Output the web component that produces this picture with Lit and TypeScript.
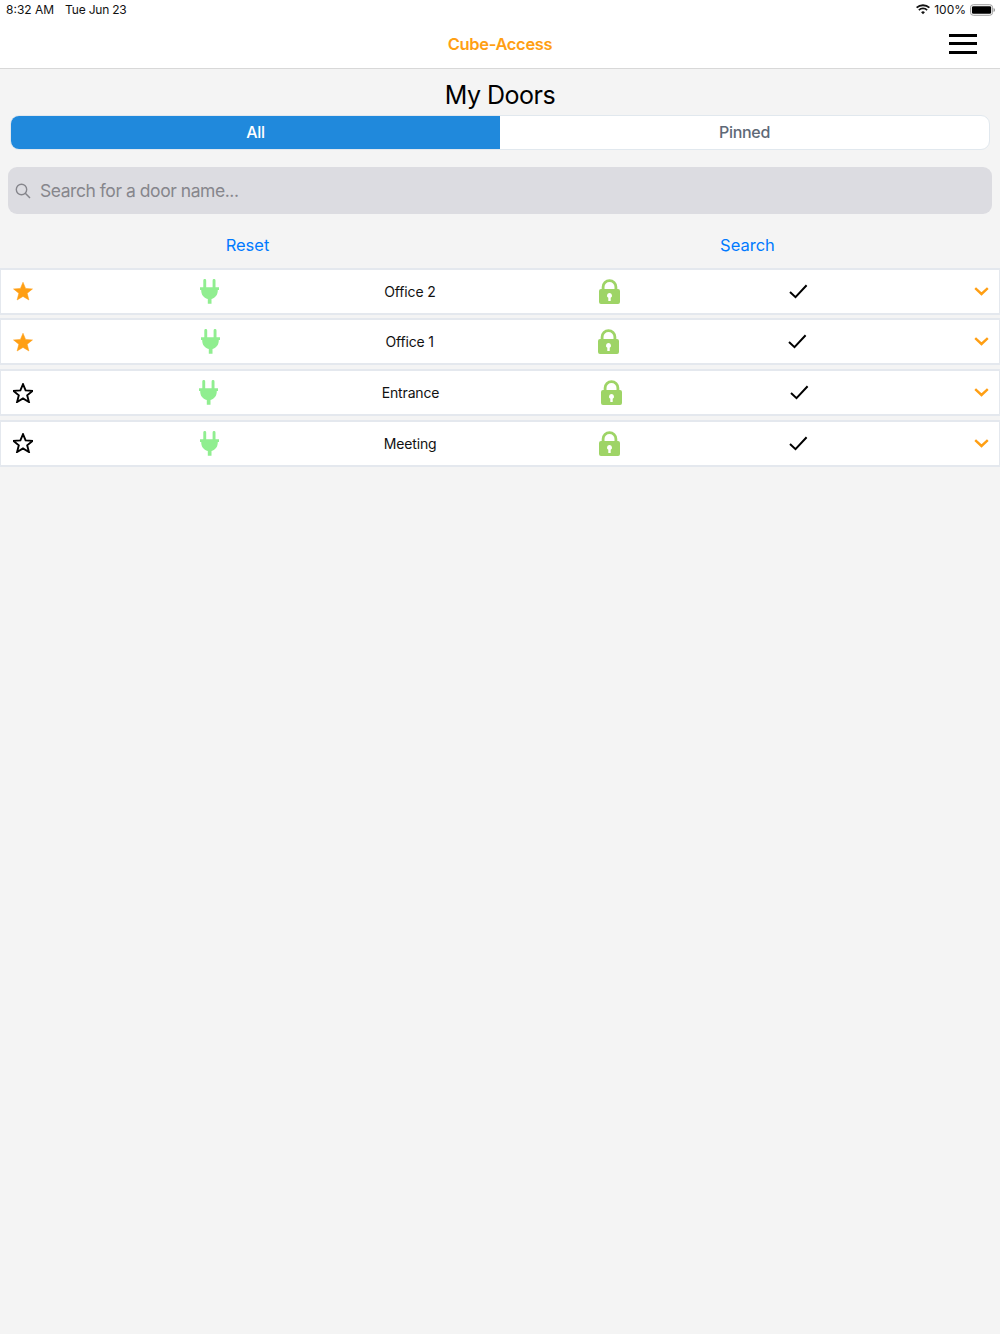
import { LitElement, html, css, svg } from "lit";
import { customElement } from "lit/decorators.js";

const star = (filled: boolean) => svg`<svg class="star" viewBox="0 0 20 20" width="20" height="20">
  <path d="M10 1.2 12.6 7.4 19.5 7.9 14.2 12.3 15.9 19 10 15.4 4.1 19 5.8 12.3 .5 7.9 7.4 7.4Z"
    fill=${filled ? "#ff9f14" : "none"} stroke=${filled ? "#ff9f14" : "#000"} stroke-width=${filled ? "0.5" : "1.9"} stroke-linejoin="miter"/></svg>`;

const plug = svg`<svg class="plug" viewBox="0 0 19 25" width="19" height="25">
  <path fill="#90ee90" d="M3.3 1.4a1.45 1.45 0 0 1 2.9 0V8.3H3.3ZM12.6 1.4a1.45 1.45 0 0 1 2.9 0V8.3h-2.9ZM0 8.3h19v2.8h-1.2c0 4.8-2.2 7.8-6.3 8.9V24.700H7.800V20C3.500 18.900 1.200 15.900 1.200 11.100H0Z"/></svg>`;

const lock = svg`<svg class="lock" viewBox="0 0 21 25" width="21" height="25">
  <path fill="none" stroke="#9ed466" stroke-width="2.800" d="M4.100 11V8a6.400 6.400 0 0 1 12.800 0V11"/>
  <path fill="#9ed466" fill-rule="evenodd" d="M2 10h17a2 2 0 0 1 2 2V23a2 2 0 0 1-2 2H2a2 2 0 0 1-2-2V12a2 2 0 0 1 2-2ZM10.500 14a2.500 2.500 0 0 0-1.200 4.700V22h2.400v-3.300a2.500 2.500 0 0 0-1.200-4.700Z"/></svg>`;

const check = svg`<svg viewBox="0 0 19 15" width="19" height="15"><path d="M1 8 6.500 13.200 17.600 1.200" fill="none" stroke="#000" stroke-width="2"/></svg>`;

const chevron = svg`<svg viewBox="0 0 15 9" width="15" height="9"><path d="M1.200 1.200 7.500 7 13.800 1.200" fill="none" stroke="#ff9f14" stroke-width="2.400"/></svg>`;

const doors = [
  { name: "Office 2", pinned: true },
  { name: "Office 1", pinned: true },
  { name: "Entrance", pinned: false },
  { name: "Meeting", pinned: false },
];

@customElement("app-root")
export class AppRoot extends LitElement {
  static styles = css`
    :host { display: block; height: 1334px; background: #f4f4f4; font-family: Inter, "Liberation Sans", sans-serif; overflow: hidden; }
    .top { background: #fff; height: 68px; border-bottom: 1px solid #d8d8d8; display: flex; flex-direction: column; }
    .status { height: 19px; display: flex; justify-content: space-between; align-items: center; padding: 0 5px 0 6px; font-size: 12px; color: #111; }
    .status-left { display: flex; gap: 11px; }
    .status-left span + span { letter-spacing: -0.2px; }
    .status-right { display: flex; align-items: center; gap: 4px; }
    .nav { flex: 1; display: grid; grid-template-columns: 1fr auto 1fr; align-items: center; }
    .brand { font-size: 16.500px; font-weight: 600; color: #ff9f14; letter-spacing: -0.35px; }
    .menu { justify-self: end; margin-right: 23px; width: 28px; display: flex; flex-direction: column; gap: 5.500px; }
    .menu span { height: 3px; background: #000; }
    h1 { margin: 0; height: 46px; display: flex; align-items: center; justify-content: center; padding-top: 5px; box-sizing: border-box; font-weight: 400; font-size: 25px; letter-spacing: -0.5px; color: #000; }
    .seg { margin: 0 10px; height: 35px; box-sizing: border-box; display: flex; border: 1px solid #e1e8ee; border-radius: 9px; overflow: hidden; background: #fff; }
    .seg div { flex: 1; display: flex; align-items: center; justify-content: center; padding-bottom: 1.500px; box-sizing: border-box; font-size: 16px; font-weight: 500; letter-spacing: -0.3px; color: #5e6977; }
    .seg .on { background: #2089dc; color: #fff; }
    .search { margin: 17px 8px 0; height: 47px; background: #dcdce1; border-radius: 9px; display: flex; align-items: center; padding-left: 7px; gap: 9px; color: #86868c; font-size: 17.500px; letter-spacing: -0.45px; }
    .actions { display: grid; grid-template-columns: 495px 505px; height: 53.500px; box-sizing: border-box; padding-top: 8px; align-items: center; }
    .actions div { text-align: center; color: #007aff; font-size: 16.500px; }
    .rows { display: flex; flex-direction: column; gap: 3.750px; }
    .row { height: 47px; box-sizing: border-box; background: #fff; border: solid #e4e8ee; border-width: 2px 1px 2.500px 1.500px; display: flex; align-items: center; justify-content: space-between; padding: 0 10px 0 12px; font-size: 14px; letter-spacing: -0.15px; color: #111; }
    svg { display: block; }
    .plug { margin: 0 -1px 0 1px; }
    .lock { margin: 0 3px 0 -3px; }
  `;

  render() {
    return html`
      <div class="top">
        <div class="status">
          <div class="status-left"><span>8:32 AM</span><span>Tue Jun 23</span></div>
          <div class="status-right">
            <svg viewBox="0 0 16 12" width="14" height="11"><path fill="#111" d="M8 11.500 5.800 9.100a3.200 3.200 0 0 1 4.400 0ZM3.900 7.300 2.600 5.900a8 8 0 0 1 10.800 0L12.100 7.300a6 6 0 0 0-8.200 0ZM1.400 4.700 0 3.200a11.800 11.800 0 0 1 16 0L14.600 4.700a9.800 9.800 0 0 0-13.200 0Z"/></svg>
            <span>100%</span>
            <svg viewBox="0 0 26 12" width="25" height="12"><rect x=".5" y=".5" width="23" height="11" rx="3" fill="none" stroke="#999"/><rect x="2" y="2" width="20" height="8" rx="1.500" fill="#000"/><path d="M24.500 4v4c1-.3 1.500-1 1.500-2s-.5-1.700-1.500-2Z" fill="#999"/></svg>
          </div>
        </div>
        <div class="nav">
          <span></span>
          <div class="brand">Cube-Access</div>
          <div class="menu"><span></span><span></span><span></span></div>
        </div>
      </div>
      <h1>My Doors</h1>
      <div class="seg"><div class="on">All</div><div>Pinned</div></div>
      <div class="search">
        <svg viewBox="0 0 16 16" width="16" height="16"><circle cx="6.500" cy="6.500" r="5.200" fill="none" stroke="#86868c" stroke-width="1.400"/><path d="M10.300 10.300 15 15" stroke="#86868c" stroke-width="1.500"/></svg>
        <span>Search for a door name...</span>
      </div>
      <div class="actions"><div>Reset</div><div>Search</div></div>
      <div class="rows">
        ${doors.map(
          (d) => html`<div class="row">
            ${star(d.pinned)} ${plug}
            <span>${d.name}</span>
            ${lock} ${check} ${chevron}
          </div>`
        )}
      </div>
    `;
  }
}
